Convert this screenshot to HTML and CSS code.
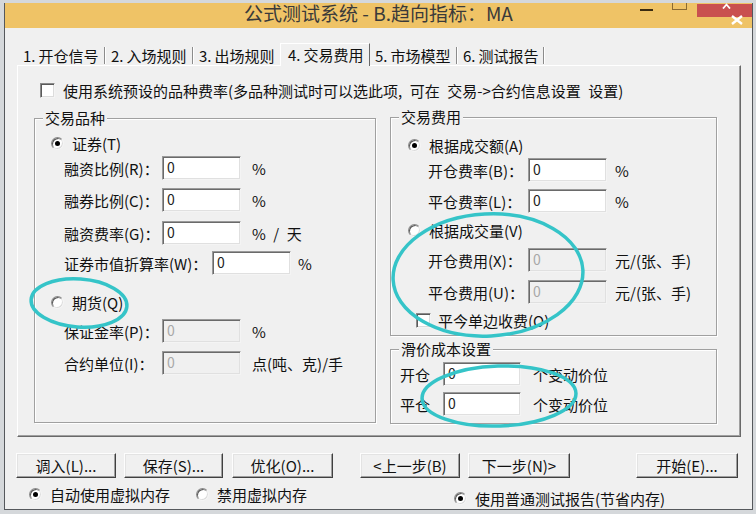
FILE: index.html
```html
<!DOCTYPE html>
<html lang="zh-CN">
<head>
<meta charset="utf-8">
<title>公式测试系统</title>
<link rel="stylesheet" href="styles.css">
</head>
<body>
<div class="window">
  <div class="titlebar">
    <div class="title">公式测试系统 - B.趋向指标：MA</div>
    <span class="ctl-min"></span>
    <span class="ctl-max"></span>
    <span class="ctl-close"></span>
    <svg class="ctl-up" width="9" height="6" viewBox="0 0 9 6"><path d="M1 5.5 L4.5 1.5 L8 5.5" stroke="#fff" stroke-width="1.8" fill="none"/></svg>
    <svg class="ctl-x" width="12" height="10" viewBox="0 0 12 10"><path d="M1 1 L11 9 M11 1 L1 9" stroke="#fff" stroke-width="2.4" fill="none"/></svg>
  </div>
  <div class="content">
    <div class="tabs">
      <div class="tab t1">1.&thinsp;开仓信号</div>
      <div class="tab t2">2.&thinsp;入场规则</div>
      <div class="tab t3">3.&thinsp;出场规则</div>
      <div class="tab t4 sel">4.&thinsp;交易费用</div>
      <div class="tab t5">5.&thinsp;市场模型</div>
      <div class="tab t6">6.&thinsp;测试报告</div>
    </div>
    <div class="panel">
      <div class="topcheck">
        <span class="check"></span>
        <span class="ctext">使用系统预设的品种费率(多品种测试时可以选此项,&ensp;可在&ensp;交易-&gt;合约信息设置&ensp;设置)</span>
      </div>
      <div class="groups">
        <div class="group g-left">
          <div class="gtitle">交易品种</div>
          <div class="rrow pl16 mt8"><span class="radio on"></span><span class="rtext">证券(T)</span></div>
          <div class="row pl29 mt4"><span class="lbl">融资比例(R)：</span><span class="inp">0</span><span class="unit">%</span></div>
          <div class="row pl29 mt8"><span class="lbl">融券比例(C)：</span><span class="inp">0</span><span class="unit">%</span></div>
          <div class="row pl29 mt9"><span class="lbl">融资费率(G)：</span><span class="inp">0</span><span class="unit">%&ensp;/&ensp;天</span></div>
          <div class="row pl29 mt6"><span class="lbl wide">证券市值折算率(W)：</span><span class="inp">0</span><span class="unit u7">%</span></div>
          <div class="rrow pl16 mt18"><span class="radio"></span><span class="rtext">期货(Q)</span></div>
          <div class="row pl29 mt8"><span class="lbl">保证金率(P)：</span><span class="inp dis">0</span><span class="unit">%</span></div>
          <div class="row pl29 mt8"><span class="lbl">合约单位(I)：</span><span class="inp dis">0</span><span class="unit">点(吨、克)/手</span></div>
        </div>
        <div class="right-col">
          <div class="group g-fee">
            <div class="gtitle">交易费用</div>
            <div class="rrow pl17 mt11"><span class="radio on"></span><span class="rtext">根据成交额(A)</span></div>
            <div class="row pl37 mt4"><span class="lbl lbl-r">开仓费率(B)：</span><span class="inp">0</span><span class="unit u8">%</span></div>
            <div class="row pl37 mt7"><span class="lbl lbl-r">平仓费率(L)：</span><span class="inp">0</span><span class="unit u8">%</span></div>
            <div class="rrow pl17 mt8"><span class="radio"></span><span class="rtext">根据成交量(V)</span></div>
            <div class="row pl37 mt9"><span class="lbl lbl-r">开仓费用(X)：</span><span class="inp dis">0</span><span class="unit u8">元/(张、手)</span></div>
            <div class="row pl37 mt8"><span class="lbl lbl-r">平仓费用(U)：</span><span class="inp dis">0</span><span class="unit u8">元/(张、手)</span></div>
            <div class="rrow pl25 mt7"><span class="check"></span><span class="rtext r7">平今单边收费(O)</span></div>
          </div>
          <div class="group g-slip">
            <div class="gtitle">滑价成本设置</div>
            <div class="row pl9 mt5"><span class="lbl lbl-s">开仓</span><span class="inp w78">0</span><span class="unit u12">个变动价位</span></div>
            <div class="row pl9 mt6"><span class="lbl lbl-s">平仓</span><span class="inp w78">0</span><span class="unit u12">个变动价位</span></div>
          </div>
        </div>
      </div>
    </div>
    <div class="btnrow">
      <div class="btn b1">调入(L)...</div>
      <div class="btn b2">保存(S)...</div>
      <div class="btn b3">优化(O)...</div>
      <div class="btn b4">&lt;上一步(B)</div>
      <div class="btn b5">下一步(N)&gt;</div>
      <div class="btn b6">开始(E)...</div>
    </div>
    <div class="optrow">
      <div class="opt o1"><span class="radio on"></span><span class="rtext">自动使用虚拟内存</span></div>
      <div class="opt o2"><span class="radio"></span><span class="rtext">禁用虚拟内存</span></div>
      <div class="opt o3"><span class="radio on"></span><span class="rtext">使用普通测试报告(节省内存)</span></div>
    </div>
  </div>
</div>
<svg class="marks" width="756" height="514" viewBox="0 0 756 514">
  <g fill="none" stroke="#35c4c8" stroke-width="3.5">
    <ellipse cx="79" cy="303" rx="48" ry="24" transform="rotate(4 79 303)"/>
    <ellipse cx="488" cy="275" rx="95" ry="61" transform="rotate(-3 488 275)"/>
    <ellipse cx="499" cy="396" rx="77" ry="30" transform="rotate(-2 499 396)"/>
  </g>
</svg>
</body>
</html>
```

FILE: styles.css
```css
* { box-sizing: border-box; }
html, body { margin: 0; padding: 0; }
body {
  width: 756px;
  height: 514px;
  overflow: hidden;
  position: relative;
  background: #d5d8db;
  font-family: "Noto Sans CJK SC", sans-serif;
  font-size: 15px;
  color: #111;
}
.window {
  margin: 3px 0 0 4px;
  width: 749px;
  height: 507px;
  background: #f0f0f0;
  border: 1px solid #55585c;
  border-top: 0;
}
.titlebar {
  position: relative;
  height: 25px;
  background: #efc366;
  text-align: center;
}
.title {
  padding-top: 1px;
  font-size: 19px;
  line-height: 18px;
  color: #3a3a3a;
  white-space: nowrap;
}
.ctl-min {
  position: absolute; left: 635px; top: 6px;
  width: 13px; height: 2px; background: #3a2a10;
}
.ctl-max {
  position: absolute; left: 667px; top: 0;
  width: 15px; height: 7px;
  border: 1px solid #8a6a30; border-top: 0;
}
.ctl-close {
  position: absolute; left: 692px; top: 1px;
  width: 55px; height: 13px; background: #c9504f;
}
.ctl-up { position: absolute; left: 717px; top: 0px; }
.ctl-x { position: absolute; left: 726px; top: 12px; }

.content { padding: 15px 11px 0 12px; }

/* tabs */
.tabs { display: flex; align-items: flex-end; height: 22px; }
.tab {
  height: 17px;
  line-height: 17px;
  margin-bottom: 1px;
  padding-left: 6px;
  border-right: 1px solid #8c8c8c;
  box-shadow: 1px 0 0 #fff;
  white-space: nowrap;
}
.t1 { width: 88px; }
.t2 { width: 88px; }
.t3 { width: 87px; border-right: 0; box-shadow: none; }
.t4 { width: 90px; }
.t5 { width: 87px; padding-left: 5px; }
.t6 { width: 87px; }
.tab.sel {
  height: 23px;
  line-height: 21px;
  margin-bottom: -1px;
  padding-left: 7px;
  border-top: 1px solid #fff;
  border-left: 1px solid #fff;
  border-right: 1px solid #696969;
  box-shadow: none;
  background: #f0f0f0;
  position: relative;
  z-index: 1;
}

/* panel */
.panel {
  height: 372px;
  border: 1px solid;
  border-color: #fff #696969 #696969 #fff;
  box-shadow: inset -1px -1px 0 #a0a0a0;
}
.topcheck {
  display: flex;
  align-items: center;
  height: 18px;
  margin-top: 15px;
  padding-left: 22px;
  white-space: nowrap;
}
.topcheck .ctext { margin-left: 8px; }

.check {
  flex: none;
  width: 15px; height: 15px;
  background: #fff;
  border: 1px solid;
  border-color: #8a8a8a #f4f4f4 #f4f4f4 #8a8a8a;
  box-shadow: inset 1px 1px 0 #5a5a5a, inset -1px -1px 0 #dcdcdc;
}
.radio {
  flex: none;
  width: 13px; height: 13px;
  border-radius: 50%;
  background: #fff;
  border: 1px solid;
  border-color: #8a8a8a #f4f4f4 #f4f4f4 #8a8a8a;
  box-shadow: inset 1px 1px 0 #5a5a5a, inset -1px -1px 0 #dcdcdc;
  display: grid;
  place-items: center;
}
.radio.on::after {
  content: "";
  width: 5px; height: 5px;
  border-radius: 50%;
  background: #000;
}
.rtext { margin-left: 8px; white-space: nowrap; }
.rtext.r7 { margin-left: 7px; }

/* groups */
.groups { display: flex; align-items: flex-start; margin-top: 18px; padding-left: 16px; }
.group {
  border: 1px solid #a0a0a0;
  box-shadow: inset 1px 1px 0 #fff, 1px 1px 0 #fff;
}
.g-left { width: 342px; height: 305px; margin-top: 1px; }
.right-col { margin-left: 14px; width: 327px; }
.g-fee { height: 219px; }
.g-slip { height: 75px; margin-top: 13px; }
.gtitle {
  width: fit-content;
  margin: -9px 0 0 8px;
  padding: 0 2px;
  line-height: 16px;
  background: #f0f0f0;
  white-space: nowrap;
}

.row { display: flex; align-items: center; height: 24px; white-space: nowrap; }
.rrow { display: flex; align-items: center; height: 18px; white-space: nowrap; }
.lbl { flex: none; width: 98px; }
.lbl.wide { width: 148px; }
.lbl.lbl-r { width: 100px; }
.lbl.lbl-s { width: 43px; }
.inp {
  flex: none;
  width: 79px;
  height: 24px;
  background: #fff;
  border: 1px solid;
  border-color: #9a9a9a #f4f4f4 #f4f4f4 #9a9a9a;
  box-shadow: inset 1px 1px 0 #6a6a6a, inset -1px -1px 0 #e0e0e0;
  font-size: 14px;
  line-height: 20px;
  padding-left: 4px;
  color: #222;
}
.inp.w78 { width: 78px; }
.inp.dis { background: #f0f0f0; color: #a8a8a8; }
.unit { margin-left: 11px; }
.unit.u7 { margin-left: 7px; }
.unit.u8 { margin-left: 8px; }
.unit.u12 { margin-left: 12px; }

.pl9 { padding-left: 9px; }
.pl16 { padding-left: 16px; }
.pl17 { padding-left: 17px; }
.pl25 { padding-left: 25px; }
.pl29 { padding-left: 29px; }
.pl37 { padding-left: 37px; }
.mt4 { margin-top: 4px; }
.mt5 { margin-top: 5px; }
.mt6 { margin-top: 6px; }
.mt7 { margin-top: 7px; }
.mt8 { margin-top: 8px; }
.mt9 { margin-top: 9px; }
.mt11 { margin-top: 11px; }
.mt18 { margin-top: 18px; }

/* buttons */
.btnrow { display: flex; margin-top: 16px; height: 25px; }
.btn {
  flex: none;
  height: 25px;
  border: 1px solid;
  border-color: #fdfdfd #404040 #404040 #fdfdfd;
  box-shadow: inset -1px -1px 0 #a0a0a0, inset 1px 1px 0 #e3e3e3;
  background: #f0f0f0;
  display: flex;
  align-items: center;
  justify-content: center;
  white-space: nowrap;
}
.b1 { width: 100px; margin-left: -1px; }
.b2 { width: 99px; margin-left: 8px; }
.b3 { width: 101px; margin-left: 9px; }
.b4 { width: 100px; margin-left: 27px; }
.b5 { width: 102px; margin-left: 8px; }
.b6 { width: 102px; margin-left: 66px; }

.optrow { display: flex; align-items: flex-start; margin-top: 7px; }
.opt { display: flex; align-items: center; height: 18px; white-space: nowrap; }
.o1 { margin-left: 12px; }
.o2 { margin-left: 26px; }
.o3 { margin-left: 147px; margin-top: 4px; }

.marks { position: absolute; left: 0; top: 0; pointer-events: none; }
```
